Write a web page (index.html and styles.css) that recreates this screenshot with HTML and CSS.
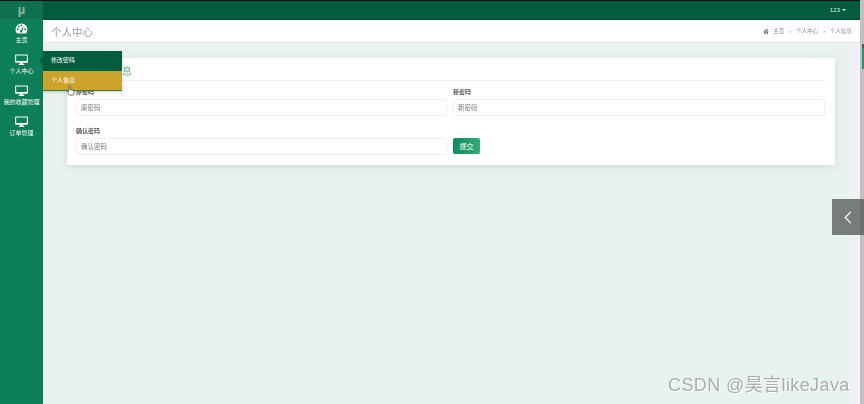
FILE: index.html
```html
<!DOCTYPE html>
<html lang="zh-CN">
<head>
    <meta charset="UTF-8">
    <title>个人中心</title>
    <link rel="stylesheet" href="styles.css">
</head>
<body>
    <div class="page">
        <aside class="sidebar">
            <div class="logo">µ</div>
            <div class="nav-item">
                <svg class="nav-icon" viewBox="0 0 14 12"><path fill="#fff" fill-rule="evenodd" d="M7 0.500a6.500 6.500 0 0 0-6.500 6.500c0 1.800.7 3.400 1.800 4.500h9.400a6.500 6.500 0 0 0 1.800-4.500A6.500 6.500 0 0 0 7 .5zM3 7.800a1 1 0 1 1 0-2 1 1 0 0 1 0 2zm1.200-3a1 1 0 1 1 0-2 1 1 0 0 1 0 2zM7 3.500a1 1 0 1 1 0-2 1 1 0 0 1 0 2zm.9 5.300a1.300 1.300 0 1 1-1.700-.8L9.800 3.300zM11 7.800a1 1 0 1 1 0-2 1 1 0 0 1 0 2z"/></svg>
                <span>主页</span>
            </div>
            <div class="nav-item">
                <svg class="nav-icon" viewBox="0 0 14 12"><path fill="#fff" fill-rule="evenodd" d="M1 .5h12a1 1 0 0 1 1 1v7a1 1 0 0 1-1 1H8.500l.5 1.300h1V12H4v-1.200h1l.5-1.300H1a1 1 0 0 1-1-1v-7a1 1 0 0 1 1-1zM1.200 1.700v6h11.600v-6z"/></svg>
                <span>个人中心</span>
            </div>
            <div class="nav-item">
                <svg class="nav-icon" viewBox="0 0 14 12"><path fill="#fff" fill-rule="evenodd" d="M1 .5h12a1 1 0 0 1 1 1v7a1 1 0 0 1-1 1H8.500l.5 1.300h1V12H4v-1.200h1l.5-1.300H1a1 1 0 0 1-1-1v-7a1 1 0 0 1 1-1zM1.200 1.700v6h11.600v-6z"/></svg>
                <span>我的收藏管理</span>
            </div>
            <div class="nav-item">
                <svg class="nav-icon" viewBox="0 0 14 12"><path fill="#fff" fill-rule="evenodd" d="M1 .5h12a1 1 0 0 1 1 1v7a1 1 0 0 1-1 1H8.500l.5 1.300h1V12H4v-1.200h1l.5-1.300H1a1 1 0 0 1-1-1v-7a1 1 0 0 1 1-1zM1.200 1.700v6h11.600v-6z"/></svg>
                <span>订单管理</span>
            </div>
        </aside>

        <div class="right">
            <div class="top-bar"><span class="user">123</span><span class="caret"></span></div>
            <div class="page-head">
                <h1>个人中心</h1>
                <div class="crumbs">
                    <svg class="home" viewBox="0 0 12 10"><path fill="#777" d="M6 0 0 5l.6.7L6 1.300l5.400 4.400.6-.7-2-1.700V.6H8.500v1.100zM2 6v4h3V7h2v3h3V6L6 2.600z"/></svg>
                    <span>主页</span><i>›</i><span>个人中心</span><i>›</i><span>个人信息</span>
                </div>
            </div>
            <div class="body-row">
                <main class="content">
                    <section class="card">
                        <div class="card-title">个人信息</div>
                        <form class="form-grid">
                            <div class="field">
                                <label>原密码</label>
                                <input type="text" placeholder="原密码">
                            </div>
                            <div class="field">
                                <label>新密码</label>
                                <input type="text" placeholder="新密码">
                            </div>
                            <div class="field">
                                <label>确认密码</label>
                                <input type="text" placeholder="确认密码">
                            </div>
                            <div class="field submit-cell">
                                <button type="button">提交</button>
                            </div>
                        </form>
                    </section>
                </main>
                <div class="scroll-strip"></div>
            </div>
        </div>
        <div class="scrollbar"><div class="thumb"></div></div>
    </div>

    <div class="flyout">
        <div class="flyout-item">修改密码</div>
        <div class="flyout-item active">个人信息</div>
    </div>
    <div class="flyout-arrow"></div>

    <svg class="pointer" viewBox="0 0 10 13"><path fill="#fff" stroke="#444" stroke-width=".9" d="M3 1.200a1 1 0 0 1 1.500 0V5.500l3.500.7c.8.200 1.200.7 1.200 1.500L8.800 11c0 .6-.4 1-1 1H4.500c-.5 0-.8-.2-1-.6L1 8c-.6-.9.400-1.600 1.200-.9l.8.800z"/></svg>

    <div class="side-tab">
        <svg viewBox="0 0 8 14"><path fill="none" stroke="#fff" stroke-width="1.300" d="M7 1 1 7l6 6"/></svg>
    </div>
    <div class="watermark">CSDN @昊言likeJava</div>
</body>
</html>
```

FILE: styles.css
```css
* {
    box-sizing: border-box;
}
html, body {
    margin: 0;
    height: 100%;
    overflow: hidden;
}
body {
    font-family: "Liberation Sans", "Noto Sans CJK SC", sans-serif;
    background: #e8f3ee;
    color: #444;
}
.page {
    display: flex;
    height: 404px;
    filter: blur(0.3px);
}
.sidebar {
    width: 43px;
    flex: none;
    background: #0c7e58;
    color: #fff;
    text-align: center;
    border-top: 1px solid #111;
}
.logo {
    height: 18px;
    background: #0f7050;
    color: #8fb5a5;
    font-size: 13px;
    font-weight: bold;
    line-height: 18px;
}
.nav-item {
    height: 31px;
    padding-top: 4px;
    font-size: 6px;
    line-height: 9px;
    white-space: nowrap;
}
.nav-item span {
    display: block;
    margin-top: 2px;
}
.nav-icon {
    display: block;
    width: 13px;
    height: 11px;
    margin: 0 auto;
}
.right {
    flex: 1;
    min-width: 0;
    display: flex;
    flex-direction: column;
}
.top-bar {
    height: 20px;
    flex: none;
    background: #045c40;
    border-top: 1px solid #111;
    border-bottom: 1px solid #03503a;
    display: flex;
    justify-content: flex-end;
    align-items: center;
    gap: 2px;
    padding-right: 14px;
    color: #e4efe9;
    font-size: 6px;
}
.caret {
    border: 2px solid transparent;
    border-top-color: #e4efe9;
    border-bottom: 0;
}
.page-head {
    height: 23px;
    flex: none;
    background: #fff;
    border-bottom: 1px solid #e3e6ea;
    display: flex;
    justify-content: space-between;
    align-items: center;
    padding: 0 8px 0 8px;
}
.page-head h1 {
    margin: 0;
    font-size: 10.5px;
    font-weight: normal;
    color: #9a9a9a;
}
.crumbs {
    display: flex;
    align-items: center;
    gap: 4px;
    font-size: 5.5px;
    color: #888;
}
.crumbs i {
    font-style: normal;
    margin: 0 1px;
}
.home {
    width: 6px;
    height: 5px;
}
.body-row {
    flex: 1;
    display: flex;
    min-height: 0;
}
.content {
    flex: 1;
    min-width: 0;
    padding: 15px 16px 0 24px;
}
.card {
    height: 107px;
    background: #fff;
    border-radius: 2px;
    box-shadow: 0 2px 8px rgba(120, 140, 170, 0.22);
    padding: 0 10px 0 9px;
}
.card-title {
    height: 23px;
    padding: 8px 0 0 16px;
    font-size: 10px;
    line-height: 12px;
    color: #6aa890;
    border-bottom: 1px solid #f0f2f2;
}
.form-grid {
    display: grid;
    grid-template-columns: 371px 372px;
    column-gap: 6px;
    row-gap: 11px;
    padding-top: 7px;
}
.field label {
    display: block;
    height: 11px;
    font-size: 6px;
    line-height: 9px;
    font-weight: bold;
    color: #555;
}
.field input {
    display: block;
    width: 100%;
    height: 17px;
    padding: 0 4px;
    border: 1px solid #f0f1f3;
    border-radius: 2px;
    background: #fff;
    font: 6.5px "Liberation Sans", "Noto Sans CJK SC", sans-serif;
    outline: none;
}
.field input::placeholder {
    color: #777;
}
.submit-cell {
    padding-top: 11px;
}
.field button {
    display: block;
    width: 27px;
    height: 16px;
    padding: 0;
    border: 0;
    border-radius: 2px;
    background: linear-gradient(90deg, #118a5f, #2fae78);
    color: #fff;
    font: 7px "Liberation Sans", "Noto Sans CJK SC", sans-serif;
}
.scroll-strip {
    width: 9px;
    flex: none;
    background: #f0f0f6;
}
.scrollbar {
    width: 4px;
    flex: none;
    background: #c0c0c0;
    padding: 44px 0 0 2px;
}
.thumb {
    height: 25px;
    background: linear-gradient(#555 0 4px, #2f8f66 4px);
}
.flyout {
    position: absolute;
    left: 43px;
    top: 51px;
    width: 79px;
    color: #fff;
    font-size: 6px;
    box-shadow: 0 1px 2px rgba(0, 0, 0, 0.2);
    filter: blur(0.3px);
}
.flyout-item {
    height: 20px;
    line-height: 18px;
    padding-left: 8px;
    background: #045c40;
}
.flyout-item.active {
    background: #cda32e;
    border-bottom: 1px solid #3b7c50;
}
.flyout-arrow {
    position: absolute;
    left: 39px;
    top: 57px;
    border: 4px solid transparent;
    border-left: 0;
    border-right-color: #045c40;
}
.pointer {
    position: absolute;
    left: 66px;
    top: 85px;
    width: 9px;
    height: 11px;
}
.side-tab {
    position: absolute;
    left: 832px;
    top: 199px;
    width: 32px;
    height: 36px;
    background: rgba(80, 84, 82, 0.74);
    display: flex;
    justify-content: center;
    align-items: center;
}
.side-tab svg {
    width: 8px;
    height: 13px;
}
.watermark {
    position: absolute;
    left: 668px;
    top: 374px;
    font-size: 18px;
    letter-spacing: 0.4px;
    line-height: 22px;
    color: #a9aeac;
    text-shadow: 1px 1px 0 #fff;
    white-space: nowrap;
}
```
